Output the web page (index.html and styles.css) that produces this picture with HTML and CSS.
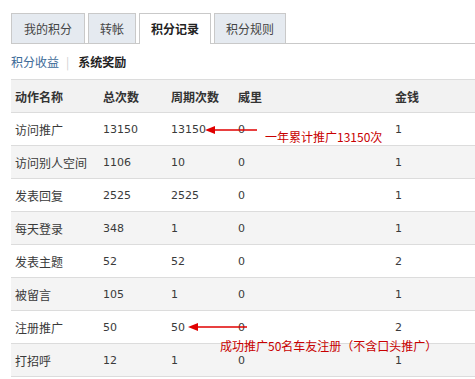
FILE: index.html
```html
<!DOCTYPE html>
<html lang="zh">
<head>
<meta charset="utf-8">
<title>积分记录</title>
<link rel="stylesheet" href="styles.css">
</head>
<body>
<div class="page">
  <ul class="tabs">
    <li class="tab wide">我的积分</li>
    <li class="tab">转帐</li>
    <li class="tab active">积分记录</li>
    <li class="tab">积分规则</li>
  </ul>
  <div class="subnav">
    <a class="sublink">积分收益</a>
    <span class="sep">|</span>
    <strong class="current">系统奖励</strong>
  </div>
  <table class="grid">
    <colgroup>
      <col class="c1"><col class="c2"><col class="c3"><col class="c4"><col class="c5">
    </colgroup>
    <thead>
      <tr><th>动作名称</th><th>总次数</th><th>周期次数</th><th>威里</th><th>金钱</th></tr>
    </thead>
    <tbody>
      <tr><td>访问推广</td><td>13150</td><td>13150</td><td>0</td><td>1</td></tr>
      <tr class="alt"><td>访问别人空间</td><td>1106</td><td>10</td><td>0</td><td>1</td></tr>
      <tr><td>发表回复</td><td>2525</td><td>2525</td><td>0</td><td>1</td></tr>
      <tr class="alt"><td>每天登录</td><td>348</td><td>1</td><td>0</td><td>1</td></tr>
      <tr><td>发表主题</td><td>52</td><td>52</td><td>0</td><td>2</td></tr>
      <tr class="alt"><td>被留言</td><td>105</td><td>1</td><td>0</td><td>1</td></tr>
      <tr><td>注册推广</td><td>50</td><td>50</td><td>0</td><td>2</td></tr>
      <tr class="alt"><td>打招呼</td><td>12</td><td>1</td><td>0</td><td>1</td></tr>
    </tbody>
  </table>

  <svg class="arrows" width="475" height="379" viewBox="0 0 475 379" aria-hidden="true">
    <line x1="212" y1="130" x2="257" y2="130" stroke="#e00000" stroke-width="1.5"/>
    <polygon points="205,130 215,126 215,134" fill="#e00000"/>
    <line x1="195" y1="327" x2="247" y2="327" stroke="#e00000" stroke-width="1.5"/>
    <polygon points="188,327 198,323 198,331" fill="#e00000"/>
  </svg>
  <span class="note note1">一年累计推广13150次</span>
  <span class="note note2">成功推广50名车友注册（不含口头推广）</span>
</div>
</body>
</html>
```
FILE: styles.css
```css
html, body {
  margin: 0;
  padding: 0;
  background: #fff;
}
.page {
  position: relative;
  width: 475px;
  height: 379px;
  overflow: hidden;
  padding-left: 11px;
  box-sizing: border-box;
  font-family: "DejaVu Sans", "Noto Sans CJK SC", sans-serif;
  font-size: 12px;
  color: #333;
}
.tabs {
  list-style: none;
  margin: 13px 0 0 0;
  padding: 0;
  display: flex;
  gap: 3px;
  border-bottom: 1px solid #c9c9c9;
  height: 30px;
}
.tab {
  height: 29px;
  line-height: 30px;
  padding: 0 11px;
  border: 1px solid #c9c9c9;
  border-bottom: none;
  background: #e5eaf0;
  color: #444;
  font-family: "Noto Sans CJK SC", sans-serif;
}
.tab.wide {
  padding: 0 12px;
}
.tab.active {
  background: #fff;
  height: 30px;
  font-weight: bold;
  color: #222;
}
.subnav {
  margin-top: 8px;
  height: 20px;
  line-height: 20px;
  display: flex;
  align-items: center;
  font-family: "Noto Sans CJK SC", sans-serif;
}
.sublink {
  color: #3d6a98;
}
.sep {
  color: #d0d0d0;
  margin: 0 9px 0 7px;
}
.current {
  color: #222;
}
.grid {
  margin-top: 7px;
  width: 464px;
  border-collapse: collapse;
  table-layout: fixed;
  border-top: 1px solid #dcdcdc;
}
.c1 { width: 88px; }
.c2 { width: 68px; }
.c3 { width: 67px; }
.c4 { width: 157px; }
.grid th, .grid td {
  height: 32px;
  padding: 0 0 0 4px;
  text-align: left;
  border-bottom: 1px solid #dcdcdc;
  white-space: nowrap;
  font-weight: normal;
}
.grid td {
  font-size: 11px;
  color: #3a3a3a;
}
.grid td:first-child {
  font-size: 12px;
  font-family: "Noto Sans CJK SC", sans-serif;
}
.grid thead tr {
  background: #f2f2f2;
}
.grid th {
  font-weight: bold;
  color: #333;
  font-family: "Noto Sans CJK SC", sans-serif;
}
.grid tr.alt {
  background: #f4f4f4;
}
.arrows {
  position: absolute;
  left: 0;
  top: 0;
  pointer-events: none;
}
.note {
  position: absolute;
  color: #c80000;
  font-family: "Noto Sans CJK SC", sans-serif;
  font-size: 12px;
  line-height: 14px;
  white-space: nowrap;
}
.note1 {
  left: 265px;
  top: 130px;
}
.note2 {
  left: 220px;
  top: 339px;
}
```
